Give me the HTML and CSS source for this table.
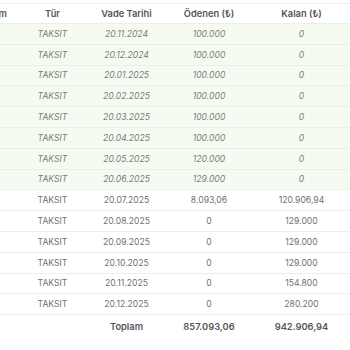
FILE: index.html
```html
<!DOCTYPE html>
<html lang="tr">
<head>
<meta charset="utf-8">
<link rel="stylesheet" href="styles.css">
</head>
<body>
<div class="wrap">
  <div class="table">
    <div class="row head">
      <div>Dönem</div><div>Tür</div><div>Vade Tarihi</div><div>Ödenen (₺)</div><div>Kalan (₺)</div>
    </div>
    <div class="row paid"><div>1</div><div>TAKSIT</div><div>20.11.2024</div><div>100.000</div><div>0</div></div>
    <div class="row paid"><div>2</div><div>TAKSIT</div><div>20.12.2024</div><div>100.000</div><div>0</div></div>
    <div class="row paid"><div>3</div><div>TAKSIT</div><div>20.01.2025</div><div>100.000</div><div>0</div></div>
    <div class="row paid"><div>4</div><div>TAKSIT</div><div>20.02.2025</div><div>100.000</div><div>0</div></div>
    <div class="row paid"><div>5</div><div>TAKSIT</div><div>20.03.2025</div><div>100.000</div><div>0</div></div>
    <div class="row paid"><div>6</div><div>TAKSIT</div><div>20.04.2025</div><div>100.000</div><div>0</div></div>
    <div class="row paid"><div>7</div><div>TAKSIT</div><div>20.05.2025</div><div>120.000</div><div>0</div></div>
    <div class="row paid"><div>8</div><div>TAKSIT</div><div>20.06.2025</div><div>129.000</div><div>0</div></div>
    <div class="row"><div>9</div><div>TAKSIT</div><div>20.07.2025</div><div>8.093,06</div><div>120.906,94</div></div>
    <div class="row"><div>10</div><div>TAKSIT</div><div>20.08.2025</div><div>0</div><div>129.000</div></div>
    <div class="row"><div>11</div><div>TAKSIT</div><div>20.09.2025</div><div>0</div><div>129.000</div></div>
    <div class="row"><div>12</div><div>TAKSIT</div><div>20.10.2025</div><div>0</div><div>129.000</div></div>
    <div class="row"><div>13</div><div>TAKSIT</div><div>20.11.2025</div><div>0</div><div>154.800</div></div>
    <div class="row"><div>14</div><div>TAKSIT</div><div>20.12.2025</div><div>0</div><div>280.200</div></div>
    <div class="row total"><div></div><div></div><div>Toplam</div><div>857.093,06</div><div>942.906,94</div></div>
  </div>
</div>
</body>
</html>
```
FILE: styles.css
```css
html, body {
  margin: 0;
  padding: 0;
  background: #fff;
}
.wrap {
  width: 350px;
  height: 350px;
  overflow: hidden;
  padding-top: 3px;
  box-sizing: border-box;
}
.table {
  margin-left: -35px;
  width: 385px;
  font-family: Inter, "Liberation Sans", sans-serif;
  font-size: 8.6px;
  color: #707070;
  border-top: 1px solid #eeeeee;
}
.row {
  display: grid;
  grid-template-columns: 52px 71px 77px 88px 97px;
  height: 20.8px;
  box-sizing: border-box;
  border-bottom: 1px solid #ededed;
  align-items: center;
  text-align: center;
}
.head {
  height: 20px;
  font-weight: 600;
  color: #555;
  font-size: 9.3px;
}
.paid {
  background: #f5fbf1;
  font-style: italic;
  color: #7a7a7a;
}
.total {
  border-bottom: none;
  font-weight: 600;
  color: #555;
  font-size: 9.3px;
  height: 22px;
}
```
